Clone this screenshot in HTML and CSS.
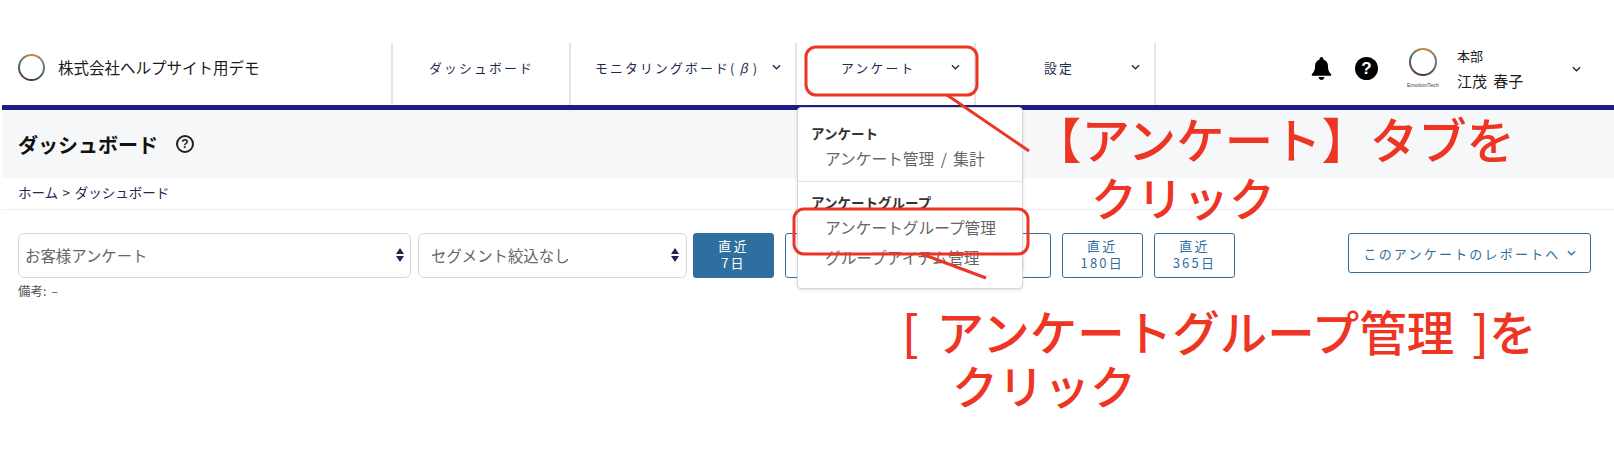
FILE: index.html
```html
<!DOCTYPE html>
<html lang="ja">

<head>
  <meta charset="UTF-8">
  <title>ダッシュボード</title>
  <link rel="stylesheet" href="styles.css">
</head>

<body>
  <div class="page">
    <header class="header">
      <div class="brand">
        <span class="brand-ring"></span>
        <span class="brand-name">株式会社ヘルプサイト用デモ</span>
      </div>
      <nav class="nav">
        <div class="nav-item nav-dash"><span>ダッシュボード</span></div>
        <div class="nav-item nav-monitor">
          <span>モニタリングボード(<i>β</i>)</span>
          <svg class="chev" viewBox="0 0 10 6"><path d="M1 1l4 4 4-4"/></svg>
        </div>
        <div class="nav-item nav-survey">
          <span>アンケート</span>
          <svg class="chev" viewBox="0 0 10 6"><path d="M1 1l4 4 4-4"/></svg>
        </div>
        <div class="nav-item nav-settings">
          <span>設定</span>
          <svg class="chev" viewBox="0 0 10 6"><path d="M1 1l4 4 4-4"/></svg>
        </div>
      </nav>
      <div class="tools">
        <svg class="bell" viewBox="0 0 22 24">
          <path d="M11 0c-1.2 0-2 .9-2 2v.7C5.900 3.600 4.200 6.200 4.200 9.500c0 4.700-1.300 6.400-3.200 8.500-.6.700-.2 1.700.8 1.700h18.400c1 0 1.400-1 .8-1.700-1.900-2.100-3.200-3.800-3.200-8.500 0-3.300-1.700-5.900-4.800-6.800V2c0-1.100-.8-2-2-2z"/>
          <path d="M8 21h6c0 1.700-1.300 3-3 3s-3-1.300-3-3z"/>
        </svg>
        <span class="help-solid">?</span>
        <div class="org-logo">
          <span class="org-ring"></span>
          <span class="org-name">EmotionTech</span>
        </div>
        <div class="user">
          <div class="user-org">本部</div>
          <div class="user-name">江茂 春子</div>
        </div>
        <svg class="chev chev-user" viewBox="0 0 10 6"><path d="M1 1l4 4 4-4"/></svg>
      </div>
    </header>
    <div class="bar"></div>

    <section class="title-row">
      <h1>ダッシュボード</h1>
      <span class="help-line">?</span>
    </section>
    <div class="breadcrumb">ホーム &gt; ダッシュボード</div>

    <section class="filters">
      <div class="select select-survey">
        <span>お客様アンケート</span>
        <svg class="updown" viewBox="0 0 8 14"><path d="M4 0l4 6H0zM4 14L0 8h8z"/></svg>
      </div>
      <div class="select select-segment">
        <span>セグメント絞込なし</span>
        <svg class="updown" viewBox="0 0 8 14"><path d="M4 0l4 6H0zM4 14L0 8h8z"/></svg>
      </div>
      <div class="ranges">
        <div class="range active">直近<br>7日</div>
        <div class="range">直近<br>30日</div>
        <div class="range">直近<br>60日</div>
        <div class="range">直近<br>90日</div>
        <div class="range">直近<br>180日</div>
        <div class="range">直近<br>365日</div>
      </div>
      <div class="report">
        <span>このアンケートのレポートへ</span>
        <svg class="chev" viewBox="0 0 10 6"><path d="M1 1l4 4 4-4"/></svg>
      </div>
    </section>
    <div class="note">備考: –</div>
  </div>

  <div class="menu">
    <div class="menu-head">アンケート</div>
    <div class="menu-link">アンケート管理 / 集計</div>
    <div class="menu-sep"></div>
    <div class="menu-head">アンケートグループ</div>
    <div class="menu-link">アンケートグループ管理</div>
    <div class="menu-link">グループアイテム管理</div>
  </div>

  <!-- annotations drawn over the screenshot -->
  <svg class="marks" viewBox="0 0 1614 462">
    <rect x="806" y="47" width="171" height="48" rx="10"/>
    <rect x="794" y="209" width="234" height="45" rx="10"/>
    <path d="M947 95l82 56"/>
    <path d="M922 254l64 24"/>
  </svg>
  <div class="note-red note-tab">【アンケート】タブを<br><span>クリック</span></div>
  <div class="note-red note-group">[ アンケートグループ管理 ]を<br><span>クリック</span></div>
</body>

</html>
```

FILE: styles.css
```css
* {
  margin: 0;
  padding: 0;
  box-sizing: border-box;
}

html,
body {
  width: 1614px;
  height: 462px;
  overflow: hidden;
  background: #fff;
}

body {
  position: relative;
  font-family: "Noto Sans CJK JP", "Noto Sans", sans-serif;
  color: #1d2a4d;
}

.page {
  margin-left: 2px;
}

.header {
  display: flex;
  height: 105px;
  padding-top: 43px;
}

.brand {
  width: 389px;
  display: flex;
  align-items: center;
  padding: 0 0 14px 16px;
  gap: 13px;
  color: #1a1a1a;
  font-size: 15.5px;
}

.brand-ring {
  position: relative;
  width: 27px;
  height: 27px;
  border-radius: 50%;
  background: conic-gradient(#c98a3c, #5f7f80 25%, #3d3a48 50%, #6b3f55 65%, #3f6f70 80%, #c98a3c);
}

.brand-ring::after {
  content: "";
  position: absolute;
  inset: 2px;
  border-radius: 50%;
  background: #fff;
}

.nav {
  display: flex;
}

.nav-item {
  position: relative;
  display: flex;
  align-items: center;
  padding-bottom: 14px;
  border-left: 2px solid #e3e5ea;
  font-size: 12.8px;
  letter-spacing: 2.2px;
}

.nav-item i {
  font-style: italic;
  padding: 0 3px;
}

.nav-item .chev {
  position: absolute;
  top: 21px;
}

.nav-dash {
  width: 178px;
  padding-left: 36px;
}

.nav-monitor {
  width: 226px;
  padding-left: 24px;
}

.nav-monitor .chev {
  left: 201px;
}

.nav-survey {
  width: 179px;
  padding-left: 44px;
}

.nav-survey .chev {
  left: 154px;
}

.nav-settings {
  width: 182px;
  padding-left: 68px;
  border-right: 2px solid #e3e5ea;
}

.nav-settings .chev {
  left: 155px;
}

.chev {
  width: 9px;
  height: 6px;
  fill: none;
  stroke: #1d2a4d;
  stroke-width: 1.4;
}

.tools {
  flex: 1;
  position: relative;
  display: flex;
  align-items: center;
  padding: 0 0 12px 155px;
}

.bell {
  width: 21px;
  height: 23px;
  fill: #000;
}

.help-solid {
  width: 23px;
  height: 23px;
  margin-left: 23px;
  border-radius: 50%;
  background: #000;
  color: #fff;
  font: bold 17px/23px "Liberation Sans", sans-serif;
  text-align: center;
}

.org-logo {
  width: 32px;
  margin-left: 29px;
  display: flex;
  flex-direction: column;
  align-items: center;
  gap: 6px;
}

.org-ring {
  position: relative;
  width: 28px;
  height: 28px;
  border-radius: 50%;
  background: conic-gradient(#c98a3c, #5f7f80 25%, #3d3a48 50%, #6b3f55 65%, #3f6f70 80%, #c98a3c);
}

.org-ring::after {
  content: "";
  position: absolute;
  inset: 2px;
  border-radius: 50%;
  background: #fff;
}

.org-name {
  font: 5.500px/6px "Liberation Sans", sans-serif;
  color: #444;
  white-space: nowrap;
}

.user {
  margin-left: 18px;
  color: #1a1a1a;
}

.user-org {
  font-size: 13px;
  line-height: 24px;
}

.user-name {
  font-size: 15px;
  line-height: 25px;
  word-spacing: 3px;
}

.chev-user {
  position: absolute;
  left: 416px;
  top: 23px;
  stroke: #222;
}

.bar {
  height: 5px;
  background: #1c1f82;
}

.title-row {
  height: 68px;
  display: flex;
  align-items: center;
  background: #f6f7f9;
  padding-left: 16px;
}

.title-row h1 {
  font-size: 20px;
  font-weight: 700;
  color: #111;
}

.help-line {
  width: 18px;
  height: 18px;
  margin-left: 18px;
  border-radius: 50%;
  border: 2px solid #222;
  color: #222;
  font: bold 12px/14px "Liberation Sans", sans-serif;
  text-align: center;
}

.breadcrumb {
  height: 32px;
  padding: 4px 0 0 16px;
  font-size: 13.5px;
  line-height: 20px;
  word-spacing: 1.5px;
  border-bottom: 1px solid #eceef1;
}

.filters {
  position: relative;
  display: flex;
  align-items: flex-start;
  padding: 23px 23px 0 16px;
}

.select {
  height: 45px;
  display: flex;
  align-items: center;
  justify-content: space-between;
  padding-bottom: 1px;
  border: 1px solid #d5d8de;
  border-radius: 6px;
  color: #666;
  font-size: 15.4px;
}

.select-survey {
  width: 393px;
  padding-left: 6px;
  padding-right: 6px;
  margin-right: 7px;
}

.select-segment {
  width: 269px;
  padding-left: 12px;
  padding-right: 7px;
  margin-right: 6px;
}

.updown {
  width: 8px;
  height: 14px;
  fill: #1b2750;
}

.ranges {
  display: flex;
  gap: 11.2px;
}

.range {
  width: 81px;
  height: 45px;
  padding-top: 3px;
  border: 1px solid #2f6f9f;
  border-radius: 3px;
  color: #2f6f9f;
  font-size: 13px;
  line-height: 17px;
  letter-spacing: 2.2px;
  text-align: center;
}

.range.active {
  background: #2f6f9f;
  color: #fff;
}

.report {
  margin-left: auto;
  width: 243px;
  height: 40px;
  display: flex;
  align-items: center;
  justify-content: center;
  gap: 6px;
  border: 1px solid #2f6f9f;
  border-radius: 3px;
  color: #2f6f9f;
  font-size: 13px;
  letter-spacing: 2.2px;
}

.report .chev {
  stroke: #2f6f9f;
}

.note {
  padding: 5px 0 0 16px;
  color: #555;
  font-size: 12.5px;
  line-height: 16px;
  word-spacing: 2px;
}

.menu {
  position: absolute;
  left: 797px;
  top: 107px;
  width: 226px;
  height: 182px;
  padding-top: 16px;
  background: #fff;
  border: 1px solid #d4d6da;
  border-radius: 4px;
  box-shadow: 0 1px 3px rgba(0, 0, 0, .12);
}

.menu-head {
  padding-left: 13px;
  color: #333;
  font-size: 13.5px;
  font-weight: 700;
  line-height: 18px;
}

.menu-link {
  padding-left: 27px;
  color: #666;
  font-size: 15.7px;
  line-height: 30px;
  word-spacing: 3px;
}

.menu-sep {
  height: 1px;
  margin: 7px 0 11px;
  background: #e3e4e7;
}

.menu-head + .menu-link {
  margin-top: 2px;
}

.marks {
  position: absolute;
  left: 0;
  top: 0;
  width: 1614px;
  height: 462px;
  fill: none;
  stroke: #ee3524;
  stroke-width: 3;
}

.note-red {
  position: absolute;
  color: #ee3524;
  white-space: nowrap;
  font-weight: 500;
}

.note-tab {
  left: 1033px;
  top: 110px;
  font-size: 48.4px;
  line-height: 57px;
}

.note-tab span {
  margin-left: 58px;
  font-size: 46px;
}

.note-group {
  left: 902px;
  top: 304px;
  font-size: 47.5px;
  line-height: 53px;
  word-spacing: 7px;
}

.note-group span {
  margin-left: 50px;
  font-size: 46px;
}
```
